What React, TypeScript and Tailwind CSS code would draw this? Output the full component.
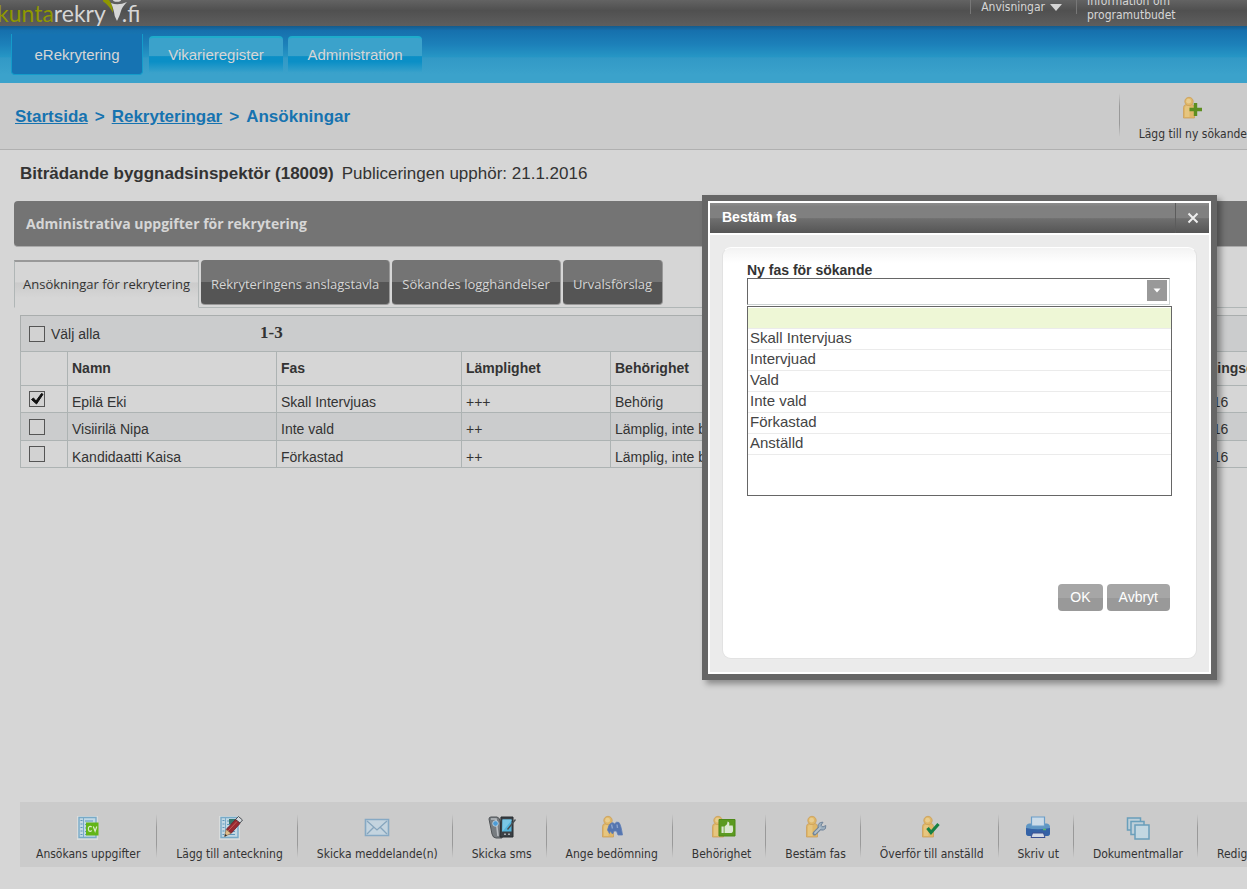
import React, { useState } from 'react'

interface Application {
  id: number
  name: string
  phase: string
  suitability: string
  eligibility: string
  date: string
}

interface ToolbarAction {
  label: string
  icon: React.ReactNode
}

const APPLICATIONS: Application[] = [
  {
    id: 1,
    name: 'Epilä Eki',
    phase: 'Skall Intervjuas',
    suitability: '+++',
    eligibility: 'Behörig',
    date: '21.1.2016',
  },
  {
    id: 2,
    name: 'Visiirilä Nipa',
    phase: 'Inte vald',
    suitability: '++',
    eligibility: 'Lämplig, inte behörig',
    date: '21.1.2016',
  },
  {
    id: 3,
    name: 'Kandidaatti Kaisa',
    phase: 'Förkastad',
    suitability: '++',
    eligibility: 'Lämplig, inte behörig',
    date: '21.1.2016',
  },
]

const PHASES = [
  '',
  'Skall Intervjuas',
  'Intervjuad',
  'Vald',
  'Inte vald',
  'Förkastad',
  'Anställd',
]

const MAIN_TABS = ['eRekrytering', 'Vikarieregister', 'Administration']

const SUB_TABS = [
  'Ansökningar för rekrytering',
  'Rekryteringens anslagstavla',
  'Sökandes logghändelser',
  'Urvalsförslag',
]

const Icon = ({ children }: { children: React.ReactNode }) => (
  <svg width="28" height="26" viewBox="0 0 28 26" aria-hidden="true">
    {children}
  </svg>
)

const Person = () => (
  <g fill="#dfb768" stroke="#cb9f5c" strokeWidth="0.8">
    <path d="M4.500 12.500q0-2.500 2.500-3h6q2.500.5 2.500 3v10.500h-11z" />
    <circle cx="10" cy="6.500" r="4.200" />
    <path d="M6 12.500q0-1.500 1.500-1.500h3v11H6z" fill="#e6c57f" stroke="none" />
    <circle cx="9.600" cy="6.200" r="2.400" fill="#e8cc8f" stroke="none" />
  </g>
)

const Sheet = () => (
  <>
    <path d="M3 2h21v24H3z" fill="#d9dcdc" />
    <path d="M5 3.500h17v20H5z" fill="#c2d8e4" stroke="#78aac8" strokeWidth="1.400" />
    <path d="M9.500 4v19" stroke="#78aac8" />
    <path
      d="M6.500 6.500h2M6.500 10h2M6.500 13.500h2M6.500 17h2M6.500 20.500h2M11 7h8M11 10.500h8M11 14h8M11 17.500h8M11 20.500h8"
      stroke="#5f97bb"
      strokeWidth="1.200"
    />
  </>
)

const ACTIONS: ToolbarAction[] = [
  {
    label: 'Ansökans uppgifter',
    icon: (
      <Icon>
        <Sheet />
        <path d="M12 8.500h12.500v13H12z" fill="#62b518" />
        <path
          d="M17.700 13.200q-1-1.200-2.300-.6-1.300.8-1 2.700.3 2.200 2 2 1-.1 1.300-.9M19.300 12.500l1.800 4.700 1.700-4.700"
          fill="none"
          stroke="#dcebc9"
          strokeWidth="1.200"
        />
      </Icon>
    ),
  },
  {
    label: 'Lägg till anteckning',
    icon: (
      <Icon>
        <Sheet />
        <path d="M13 5h7v5h-7z" fill="#35776b" />
        <path d="M22.500 2.500l4 3.500-2.500 3-4.500-3.500z" fill="#d4d8dc" stroke="#4b5055" />
        <path d="M19.500 5.500l4.500 4-9 10-4.800-4z" fill="#982a30" stroke="#6d1c24" strokeWidth="0.8" />
        <path d="M21 7.500l-9 9.500" stroke="#c65c59" />
        <path d="M10.200 15.500l4.800 4-6.500 3z" fill="#dfbd8b" stroke="#8d6d46" strokeWidth="0.6" />
        <path d="M9.300 20l1.800 1.500-2.600 1z" fill="#2f2f2f" />
      </Icon>
    ),
  },
  {
    label: 'Skicka meddelande(n)',
    icon: (
      <Icon>
        <path d="M2.500 5.500h23v16h-23z" fill="#c4d4df" stroke="#86a9c4" strokeWidth="1.600" />
        <path d="M4 7l10 9L24 7M4 20l7-7M24 20l-7-7" fill="none" stroke="#86a5bd" strokeWidth="1.300" />
      </Icon>
    ),
  },
  {
    label: 'Skicka sms',
    icon: (
      <Icon>
        <path d="M1 5q0-2 2-2h6q3 1 3 4l3 13-1 4H8q-3 0-4-4z" fill="#777c80" stroke="#4f5356" />
        <path d="M3 5h5l2 17" fill="none" stroke="#b8bcc0" strokeWidth="1.600" />
        <circle cx="7.500" cy="9.500" r="2.800" fill="#4c9cd7" stroke="#cad8e1" strokeWidth="0.800" />
        <path d="M13 3h12v20H12z" fill="#3b4045" stroke="#292d30" />
        <path d="M14.500 5.500h9v12h-9.500z" fill="#52b4dc" />
        <path d="M14.500 17.500l9-11v-1h-9z" fill="#7ac7e5" />
        <path d="M16 20.300h2M20 20.300h2" stroke="#a6abb0" strokeWidth="1.500" />
        <path d="M27.500 5.500l-8 10" stroke="#4a4e51" strokeWidth="1.400" />
      </Icon>
    ),
  },
  {
    label: 'Ange bedömning',
    icon: (
      <Icon>
        <Person />
        <path
          d="M9.500 16q1-6 4-7 2-1 3 1 2-3 4.500-1.500 2 2.500 3.500 12.500h-4.500l-1.500-4h-2.500l-1.500 3-2-3-1 2.500z"
          fill="#5575af"
          stroke="#5f7fb8"
          strokeWidth="0.800"
        />
        <path d="M13.500 10.500l1 4M19 10.500l.5 3.500" stroke="#8ca4cc" strokeWidth="1.400" />
      </Icon>
    ),
  },
  {
    label: 'Behörighet',
    icon: (
      <Icon>
        <Person />
        <path d="M11 5.500h16v16.500H11z" fill="#5c9a20" stroke="#4d8919" />
        <path d="M13.500 12.500h2.200v6.500h-2.200zM16.500 12.500l2.500-2.300.6-2.700q2.500.5 1.500 4h3.600q1.300 6.500-1.200 7.500h-7z" fill="#dce7d2" />
      </Icon>
    ),
  },
  {
    label: 'Bestäm fas',
    icon: (
      <Icon>
        <Person />
        <path d="M12.500 19.500l6-6" stroke="#71859b" strokeWidth="4" strokeLinecap="round" />
        <path
          d="M16.500 14q-1.500-4 2-5.500l2.500-.3-2 3 1.800 1.800 3-1.500q.5 4-2.500 4.500-2.500.8-4.800-2z"
          fill="#9cafbf"
          stroke="#71859b"
        />
        <path d="M13 19l5-5" stroke="#b3c0ca" strokeWidth="1.800" strokeLinecap="round" />
      </Icon>
    ),
  },
  {
    label: 'Överför till anställd',
    icon: (
      <Icon>
        <Person />
        <path d="M9.500 14l3.500 4.500 7.500-8.500" fill="none" stroke="#168144" strokeWidth="3.200" />
      </Icon>
    ),
  },
  {
    label: 'Skriv ut',
    icon: (
      <Icon>
        <path d="M2 13q0-3 3-3.500h18q3 .5 3 3.500v6q0 3-3 3H5q-3 0-3-3z" fill="#5f96c4" />
        <path d="M7.500 3h13v9h-13z" fill="#cbdbe8" stroke="#6a9ec9" strokeWidth="1.200" />
        <path d="M2 14q12 2.500 24 0v5q0 3-3 3H5q-3 0-3-3z" fill="#3462a6" />
        <path d="M8.500 19h11l1.500 4.500H7z" fill="#d3dae5" stroke="#3a4f91" />
        <path d="M19 15.500h3" stroke="#55b46b" strokeWidth="1.500" />
      </Icon>
    ),
  },
  {
    label: 'Dokumentmallar',
    icon: (
      <Icon>
        <g stroke="#699fbb" strokeWidth="1.500">
          <path d="M3.500 4h13v12h-13z" fill="#bdcfd9" />
          <path d="M7 7.500h13v13H7z" fill="#bdcfd9" />
          <path d="M11 11h14v14H11z" fill="#c2d7e1" />
        </g>
      </Icon>
    ),
  },
  { label: 'Redigera', icon: <Icon>{null}</Icon> },
]

const Checkbox = ({ id, defaultChecked, label }: { id: string; defaultChecked?: boolean; label?: string }) => (
  <span className="relative block h-4 w-4">
    <input
      id={id}
      type="checkbox"
      defaultChecked={defaultChecked}
      aria-label={label}
      className="peer block h-4 w-4 appearance-none border border-[#555] bg-[#d2d2d2]"
    />
    <svg
      viewBox="0 0 16 16"
      className="pointer-events-none absolute inset-0 hidden h-4 w-4 peer-checked:block"
      aria-hidden="true"
    >
      <path d="M2.500 8.500l2-1.500 2.500 3L12.500 2.500l1.500.8L7.500 13z" fill="#111" stroke="#111" />
    </svg>
  </span>
)

const Logo = () => (
  <a href="#" aria-label="kuntarekry.fi" className="-ml-[3px] flex items-end font-['Lato',sans-serif] text-[23px] leading-[26px]">
    <span className="text-[#8f9800]">kunta</span>
    <span className="text-[#d6d6d6]">rekry</span>
    <svg width="26" height="26" viewBox="0 0 26 26" className="-mr-[7px] -ml-[3px]" aria-hidden="true">
      <path d="M-2 0h8q4 5 4 13Q6 5-2 0z" fill="#8f9800" />
      <path d="M8 3q7 3 16-1-5 5-6 9-1 4-4 10-3-5-3-9-1-5-3-9z" fill="#d6d6d6" />
      <ellipse cx="14" cy="0" rx="4" ry="1.800" fill="#d6d6d6" />
    </svg>
    <span className="text-[#d6d6d6]">.fi</span>
  </a>
)

const Header = () => (
  <header>
    <div className="flex h-[26px] items-end justify-between overflow-hidden bg-[linear-gradient(#636363,#505050_40%,#5e5e5e)] pr-[70px] text-[#d6d6d6]">
      <Logo />
      <div className="flex items-end font-['DejaVu_Sans_Condensed','Noto_Sans',sans-serif] text-xs">
        <a href="#" className="mb-3 flex items-center gap-[5px] border-l border-[#777] pl-[10px] leading-[14px]">
          Anvisningar
          <svg width="12" height="7" viewBox="0 0 12 7" aria-hidden="true">
            <path d="M0 0h12L6 7z" fill="#d6d6d6" />
          </svg>
        </a>
        <span className="mb-3 ml-[14px] h-[14px] w-px bg-[#777]" />
        <a href="#" className="mb-1 ml-[10px] w-[90px] leading-[14px]">
          Information om programutbudet
        </a>
      </div>
    </div>
    <nav className="flex h-[57px] items-start gap-[5px] bg-[linear-gradient(#145b8c,#1670ad_8%,#1c80b9_32%,#2696c5_54%,#3299c6_56%,#3ba2cb_85%)] pt-2 pl-[11px] font-['Liberation_Sans',Arial,sans-serif] text-[15px] text-[#d6d6d6]">
      {MAIN_TABS.map((tab, index) => (
        <a
          key={tab}
          href="#"
          className={
            index === 0
              ? 'mr-px flex h-[41px] w-[132px] items-center justify-center rounded-b border-x border-b border-[#149cca] bg-[#1673b2] pt-[2px]'
              : 'mt-[2px] flex h-[37px] w-[134px] items-center justify-center rounded-t-sm border-t-2 border-[#1eaccb] bg-[linear-gradient(#3ba2cb_52%,#0b8fc6_53%,#0b8fc6_68%,#3ba2cb)]'
          }
        >
          {tab}
        </a>
      ))}
    </nav>
  </header>
)

const Divider = () => (
  <span className="h-[44px] w-px shrink-0 bg-[linear-gradient(transparent,#999_30%,#999_70%,transparent)]" />
)

const PageBar = () => (
  <div className="flex h-[67px] items-start justify-between border-b border-[#b0b0b0] bg-[#cbcbcb]">
    <nav className="flex gap-[7px] pt-6 pl-[15px] font-['Liberation_Sans',Arial,sans-serif] text-[17px] leading-5 font-bold text-[#1673b0]">
      <a href="#" className="underline">
        Startsida
      </a>
      <span>&gt;</span>
      <a href="#" className="underline">
        Rekryteringar
      </a>
      <span>&gt;</span>
      <span>Ansökningar</span>
    </nav>
    <div className="flex pt-[10px]">
      <Divider />
      <button
        type="button"
        className="ml-[19px] flex flex-col items-center font-['DejaVu_Sans_Condensed','Noto_Sans',sans-serif] text-xs leading-4 whitespace-nowrap text-[#333]"
      >
        <svg width="28" height="26" viewBox="0 0 28 26" className="mt-[2px] mb-[5px]" aria-hidden="true">
          <Person />
          <path d="M16.500 8v13M10.500 14.500h12.500" stroke="#5d8e20" strokeWidth="3.400" />
        </svg>
        Lägg till ny sökande
      </button>
    </div>
  </div>
)

const SubTabs = () => (
  <div className="mt-[13px] ml-[14px] flex items-start gap-[2px] border-b border-[#b0b6b6] font-['Open_Sans','Noto_Sans',sans-serif] text-[13px]">
    {SUB_TABS.map((tab, index) => (
      <button
        key={tab}
        type="button"
        className={
          index === 0
            ? '-mb-px h-[48px] border border-t-2 border-[#b0b6b6] border-t-[#999] border-b-[#d6d6d6] bg-[linear-gradient(#d6d6d6_45%,#cbcbcb_46%,#d6d6d6_80%)] px-2 whitespace-nowrap text-[#333]'
            : 'h-[45px] rounded-sm border-r border-b border-[#999] bg-[linear-gradient(#747474_49%,#555_50%)] px-[10px] pt-[5px] whitespace-nowrap text-[#d6d6d6]'
        }
      >
        {tab}
      </button>
    ))}
  </div>
)

const ApplicationTable = () => (
  <div className="mt-[7px] ml-5 min-w-[1280px] font-['Liberation_Sans',Arial,sans-serif] text-sm text-[#333]">
    <div className="flex h-9 items-center border border-b-0 border-[#a9adad] bg-[#cbcccd] pl-2">
      <Checkbox id="select-all" />
      <label htmlFor="select-all" className="ml-[6px] w-[209px]">
        Välj alla
      </label>
      <span className="font-['Liberation_Serif','Times_New_Roman',serif] text-[17px] font-bold">1-3</span>
    </div>
    <table className="w-full table-fixed border-collapse [&_td]:border [&_td]:border-[#adb3b3] [&_th]:border [&_th]:border-[#adb3b3]">
      <colgroup>
        <col className="w-[47px]" />
        <col className="w-[209px]" />
        <col className="w-[185px]" />
        <col className="w-[149px]" />
        <col className="w-[551px]" />
        <col />
      </colgroup>
      <thead>
        <tr className="h-[34px] text-left">
          <th />
          <th className="pb-[2px] pl-1">Namn</th>
          <th className="pb-[2px] pl-1">Fas</th>
          <th className="pb-[2px] pl-1">Lämplighet</th>
          <th className="pb-[2px] pl-1">Behörighet</th>
          <th className="pb-[2px] pl-1">Ansökningsdag</th>
        </tr>
      </thead>
      <tbody>
        {APPLICATIONS.map((item, index) => (
          <tr key={item.id} className={index % 2 ? 'h-7 bg-[#cbcccd]' : 'h-[27px]'}>
            <td className="pl-2">
              <Checkbox id={`row-${item.id}`} defaultChecked={index === 0} label={item.name} />
            </td>
            <td className="pt-[5px] pl-1">{item.name}</td>
            <td className="pt-[5px] pl-1">{item.phase}</td>
            <td className="pt-[5px] pl-1">{item.suitability}</td>
            <td className="pt-[5px] pl-1">{item.eligibility}</td>
            <td className="pt-[5px] pl-1">{item.date}</td>
          </tr>
        ))}
      </tbody>
    </table>
  </div>
)

const Toolbar = () => (
  <div className="mt-auto mb-[22px] ml-5 flex h-[65px] items-start overflow-hidden bg-[#cbcbcb] pt-3 font-['DejaVu_Sans_Condensed','Noto_Sans',sans-serif] text-xs">
    {ACTIONS.map((action, index) => (
      <React.Fragment key={action.label}>
        {index > 0 && <Divider />}
        <button
          type="button"
          className={
            index === 0
              ? 'flex shrink-0 flex-col items-center px-4 leading-4 whitespace-nowrap text-[#333]'
              : 'flex shrink-0 flex-col items-center pr-[14px] pl-[19px] leading-4 whitespace-nowrap text-[#333]'
          }
        >
          <span className="mb-[6px]">{action.icon}</span>
          {action.label}
        </button>
      </React.Fragment>
    ))}
  </div>
)

const PhaseDialog = ({ onClose }: { onClose: () => void }) => {
  const [phase, setPhase] = useState('')

  return (
    <div
      role="dialog"
      aria-labelledby="phase-title"
      className="absolute top-[195px] right-[30px] w-[515px] border-[6px] border-[#666] bg-white p-[2px] font-['Liberation_Sans',Arial,sans-serif] text-sm shadow-[4px_4px_6px_rgba(0,0,0,0.35)]"
    >
      <div className="flex h-[30px] items-stretch justify-between bg-[linear-gradient(#8d8d8d,#808080_12%,#808080_50%,#6f6f6f_52%,#555)] text-white">
        <h2 id="phase-title" className="pl-3 leading-7 font-bold">
          Bestäm fas
        </h2>
        <button
          type="button"
          aria-label="Stäng"
          onClick={onClose}
          className="flex w-[34px] items-center justify-center border-l border-[#5c5c5c]"
        >
          <svg width="12" height="12" viewBox="0 0 12 12" aria-hidden="true">
            <path d="M1.500 1.500l9 9M10.500 1.500l-9 9" stroke="#eee" strokeWidth="2" />
          </svg>
        </button>
      </div>
      <div className="mt-[2px] bg-[#ebebeb] px-[12px] pt-3 pb-[13px]">
        <div className="rounded-[9px] border border-[#e2e2e2] border-t-white bg-[linear-gradient(#f3f3f3,#fff_15px)] px-6 pt-[14px] pb-[47px]">
          <label htmlFor="phase" className="block leading-4 font-bold text-[#333]">
            Ny fas för sökande
          </label>
          <div className="relative">
            <div className="mr-[2px] flex h-[27px] items-start border border-[#ccd2d2] border-t-[#666] border-l-[#666] bg-white pr-[2px]">
              <input
                id="phase"
                role="combobox"
                aria-expanded="true"
                aria-controls="phase-list"
                readOnly
                value={phase}
                className="h-6 min-w-0 flex-1 px-[2px] text-[15px] outline-none"
              />
              <button
                type="button"
                aria-label="Ny fas"
                className="mt-px flex h-[21px] w-5 items-center justify-center bg-[#999]"
              >
                <svg width="8" height="5" viewBox="0 0 8 5" aria-hidden="true">
                  <path d="M0.500 0.500h7L4 4.500z" fill="#fff" />
                </svg>
              </button>
            </div>
            <ul
              id="phase-list"
              role="listbox"
              className="absolute inset-x-0 top-[28px] h-[190px] border border-[#666] bg-white pt-px text-[15px] text-[#444]"
            >
              {PHASES.map((item) => (
                <li
                  key={item}
                  role="option"
                  aria-selected={item === phase}
                  onClick={() => setPhase(item)}
                  className={
                    item === phase
                      ? 'h-[21px] border-b border-[#ebebeb] bg-[#eef7d6] px-[2px] leading-[18px]'
                      : 'h-[21px] border-b border-[#ebebeb] px-[2px] leading-[18px]'
                  }
                >
                  {item}
                </li>
              ))}
            </ul>
          </div>
          <div className="mt-[279px] mr-[2px] flex justify-end gap-1 text-white">
            <button
              type="button"
              onClick={onClose}
              className="h-[27px] rounded-sm bg-[linear-gradient(#a6a6a6_50%,#999_51%)] px-3 pb-[2px]"
            >
              OK
            </button>
            <button
              type="button"
              onClick={onClose}
              className="h-[27px] rounded-sm bg-[linear-gradient(#a6a6a6_50%,#999_51%)] px-3 pb-[2px]"
            >
              Avbryt
            </button>
          </div>
        </div>
      </div>
    </div>
  )
}

const App: React.FC = () => {
  const [isOpen, setIsOpen] = useState(true)

  return (
    <div className="relative flex min-h-screen flex-col overflow-hidden bg-[#d6d6d6]">
      <Header />
      <PageBar />
      <h1 className="mt-[14px] flex gap-2 pl-5 font-['Liberation_Sans',Arial,sans-serif] text-[17px] leading-5 text-[#333]">
        <strong>Biträdande byggnadsinspektör (18009)</strong>
        <span>Publiceringen upphör: 21.1.2016</span>
      </h1>
      <h2 className="mt-[17px] ml-[14px] flex h-[46px] items-center rounded-l-sm border-b border-[#aaa] bg-[#747474] pl-3 font-['Open_Sans','Noto_Sans',sans-serif] text-sm font-bold text-[#d6d6d6]">
        Administrativa uppgifter för rekrytering
      </h2>
      <SubTabs />
      <ApplicationTable />
      <Toolbar />
      {isOpen && <PhaseDialog onClose={() => setIsOpen(false)} />}
    </div>
  )
}

export default App
